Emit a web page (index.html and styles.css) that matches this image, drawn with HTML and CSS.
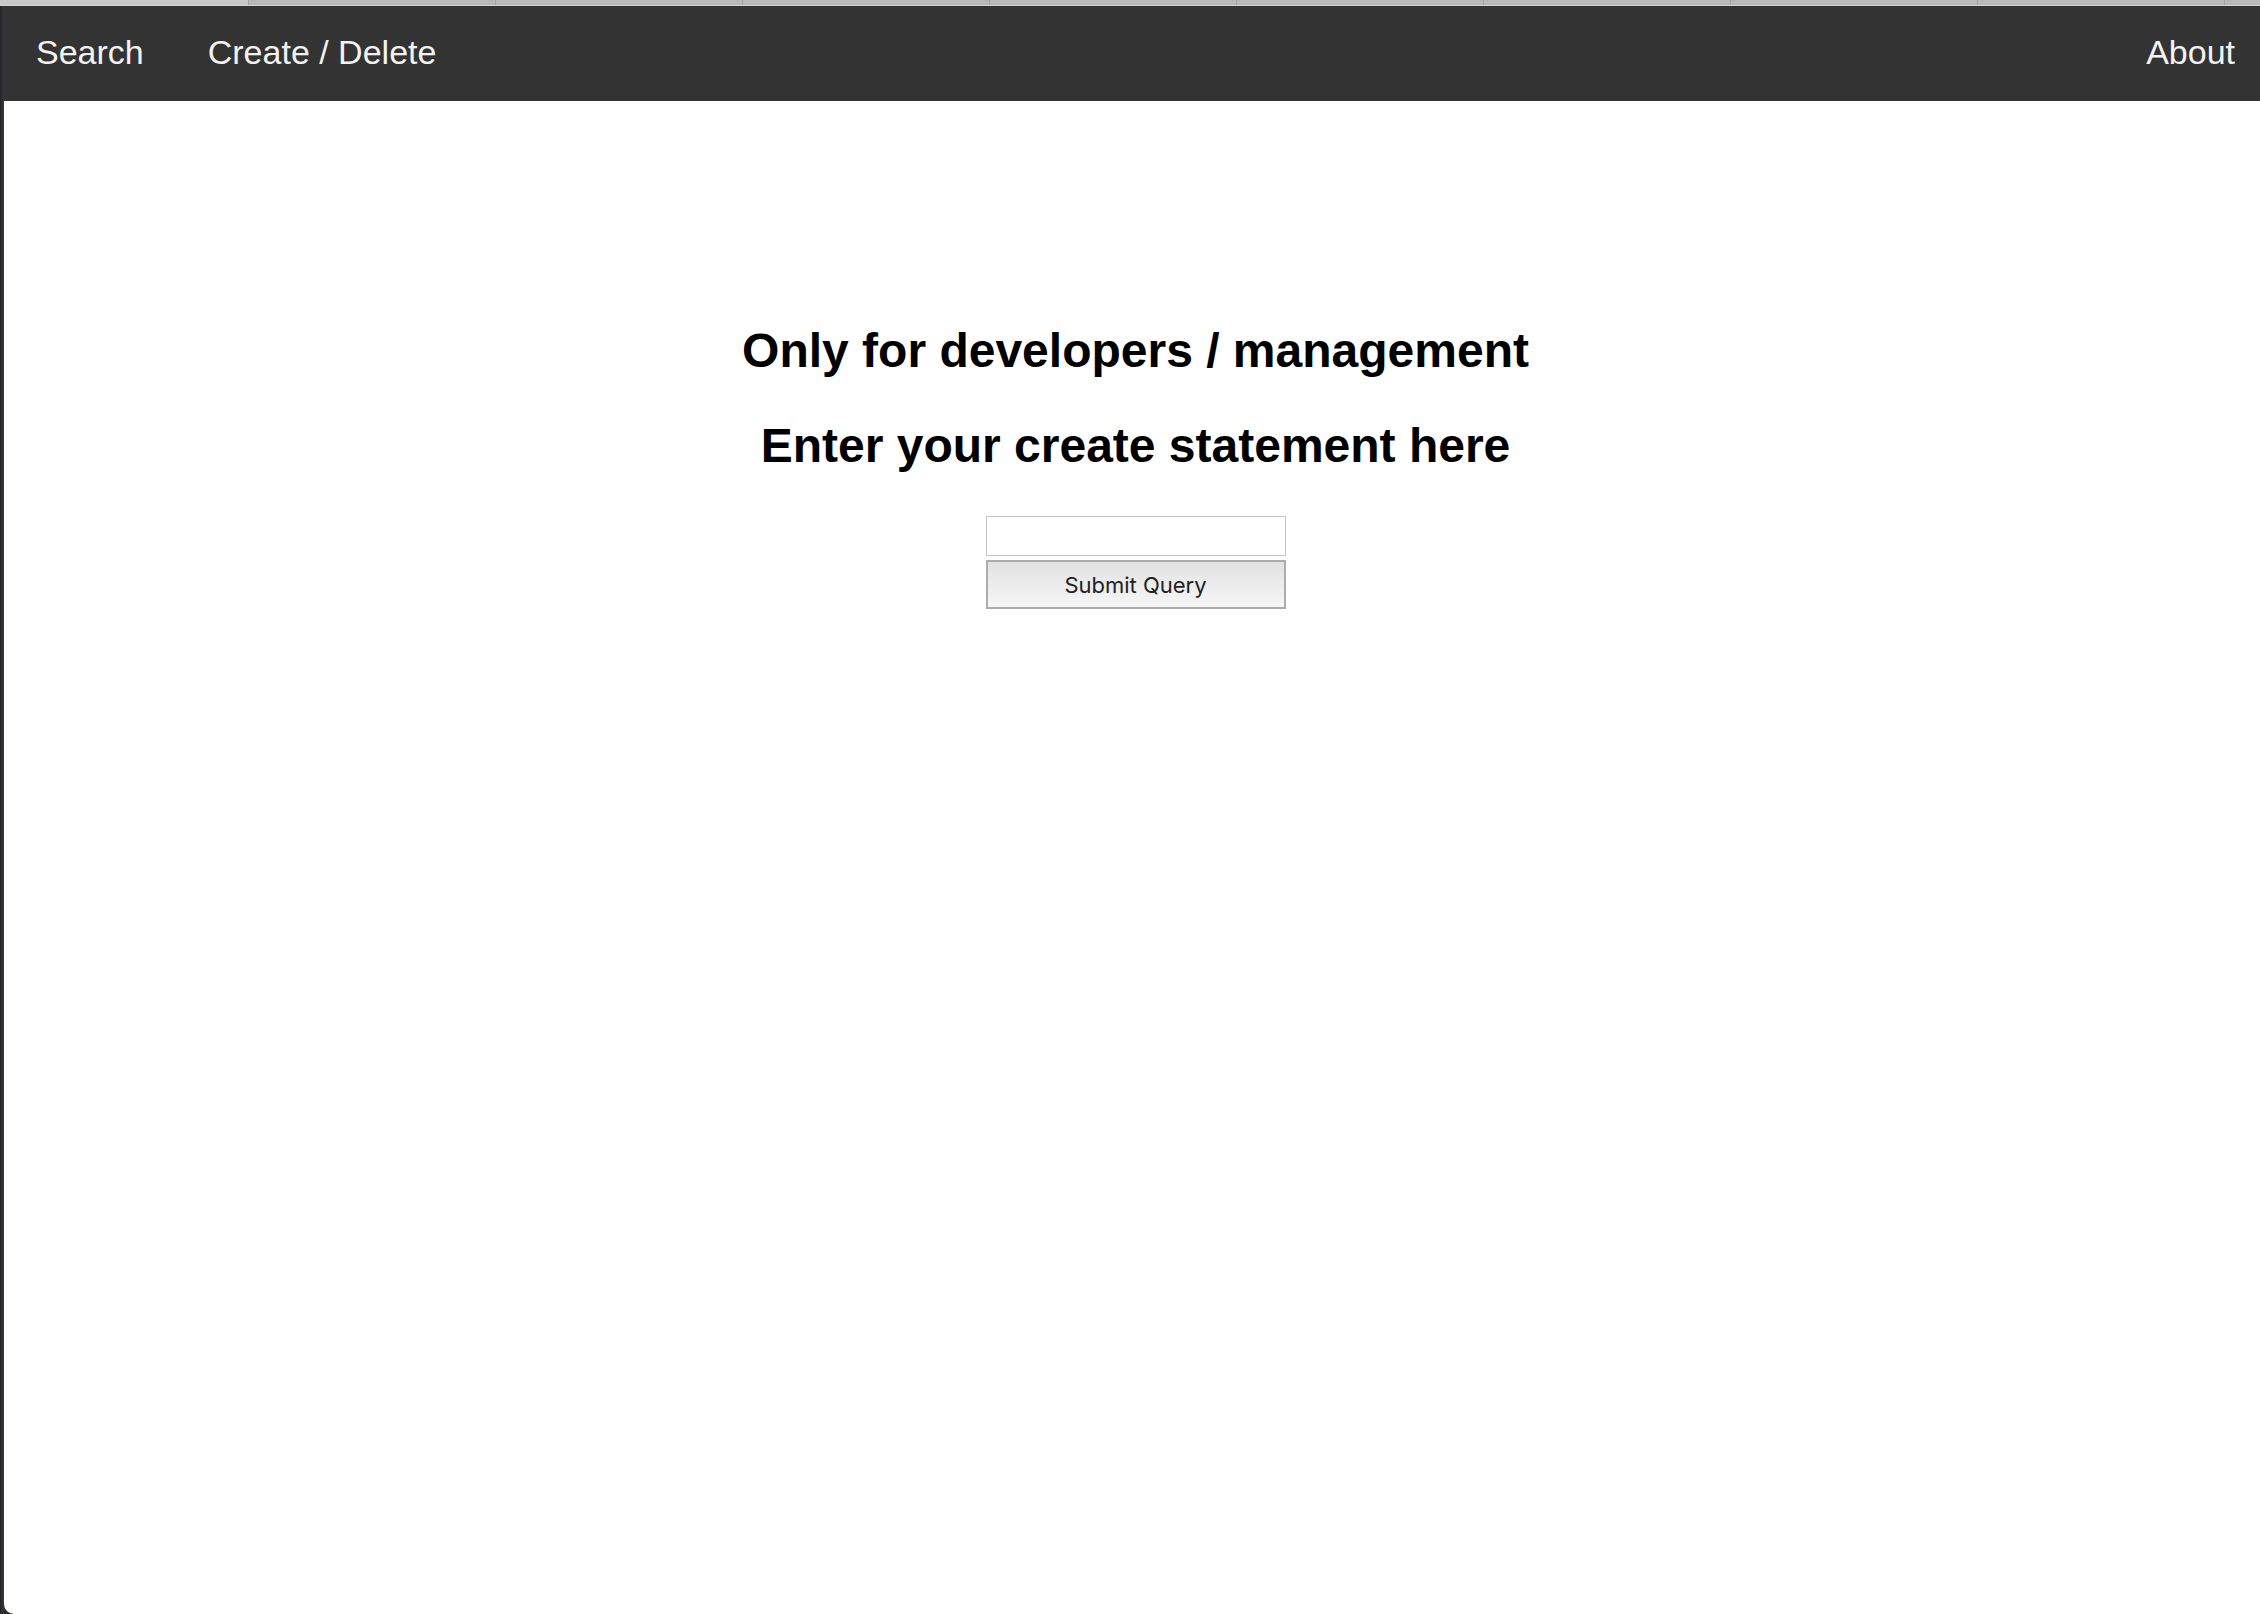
FILE: index.html
```html
<!DOCTYPE html>
<html lang="en">
<head>
<meta charset="utf-8">
<title>Create / Delete</title>
<link rel="stylesheet" href="styles.css">
</head>
<body>
<div class="window">
  <div class="tabstrip">
    <div class="tab tab-active"></div>
    <div class="tab"></div>
    <div class="tab"></div>
    <div class="tab"></div>
    <div class="tab"></div>
    <div class="tab"></div>
    <div class="tab"></div>
    <div class="tab"></div>
    <div class="tab"></div>
    <div class="tab"></div>
  </div>
  <div class="frame">
    <div class="edge"></div>
    <div class="page">
      <nav class="topnav">
        <a class="nav-link" href="#">Search</a>
        <a class="nav-link" href="#">Create / Delete</a>
        <a class="nav-link nav-right" href="#">About</a>
      </nav>
      <main class="content">
        <h2 class="title">Only for developers / management</h2>
        <h2 class="title title-last">Enter your create statement here</h2>
        <form class="query-form">
          <input class="query-input" type="text" name="query">
          <input class="query-submit" type="submit" value="Submit Query">
        </form>
      </main>
    </div>
  </div>
</div>
</body>
</html>
```

FILE: styles.css
```css
html, body {
  margin: 0;
  padding: 0;
  width: 2260px;
  height: 1614px;
  overflow: hidden;
  background: #2b2b2e;
}

.window {
  display: flex;
  flex-direction: column;
  height: 1614px;
  overflow: hidden;
}

.tabstrip {
  display: flex;
  height: 5px;
  background: #b9b9b9;
  border-bottom: 1px solid #d3d3d3;
  flex: none;
}

.tab {
  width: 246px;
  flex: none;
  border-right: 1px solid #a6a6a6;
}

.tab:first-child {
  width: 248px;
}

.tab-active {
  background: #c9c9c9;
}

.frame {
  display: flex;
  flex: 1;
  min-height: 0;
}

.edge {
  width: 4px;
  flex: none;
  background: linear-gradient(to right, #232326, #3a3a3e);
}

.page {
  width: 2263px;
  flex: none;
  background: #ffffff;
  border-bottom-left-radius: 10px;
  display: flex;
  flex-direction: column;
}

.topnav {
  display: flex;
  background: #333333;
  font-family: "Liberation Sans", Arial, sans-serif;
  flex: none;
}

.nav-link {
  display: block;
  color: #f2f2f2;
  text-decoration: none;
  font-size: 34px;
  padding: 27px 32px 29px;
  line-height: normal;
}

.nav-right {
  margin-left: auto;
}

.content {
  padding-top: 182px;
  text-align: center;
  font-family: "Liberation Sans", Arial, sans-serif;
}

.title {
  font-size: 48px;
  font-weight: bold;
  margin: 40px 0;
  color: #000;
  line-height: normal;
}

.title-last {
  margin-bottom: 43px;
}

.query-form {
  display: flex;
  flex-direction: column;
  align-items: center;
  gap: 4px;
  margin: 0;
}

.query-input {
  box-sizing: border-box;
  width: 300px;
  height: 40px;
  margin: 0;
  border: 1px solid #c4c4c4;
  background: #fff;
  padding: 0 6px;
  font-size: 24px;
  outline: none;
}

.query-submit {
  box-sizing: border-box;
  width: 300px;
  height: 49px;
  margin: 0;
  border: 2px solid #adadad;
  background: linear-gradient(to bottom, #e2e2e2, #f6f6f6);
  font-family: Inter, "Noto Sans", sans-serif;
  font-size: 22px;
  color: #222;
  padding: 0;
  border-radius: 0;
  -webkit-appearance: none;
  appearance: none;
}
```
